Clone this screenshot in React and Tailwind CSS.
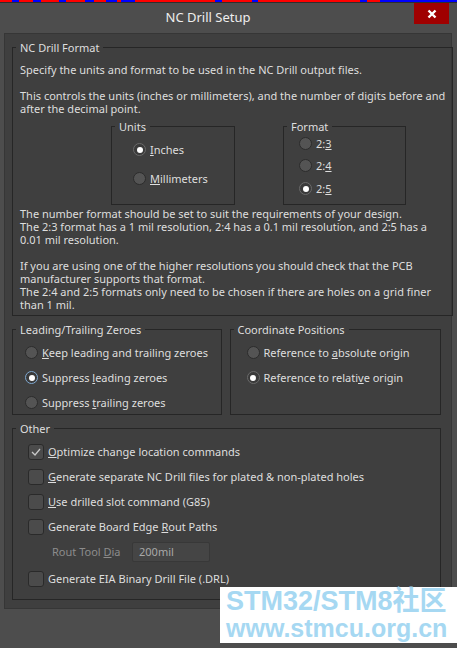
import React from "react";

const blueBits = [
  [12, 7], [33, 8], [59, 7], [85, 9], [106, 11], [121, 14], [215, 7], [252, 6], [360, 7], [380, 77],
];

const Radio = ({ checked, focus }) => (
  <span
    className={`flex items-center justify-center w-[13px] h-[13px] rounded-full shrink-0 border ${
      focus
        ? "border-[#7fa8d0] bg-[#3a3a3a]"
        : checked
        ? "border-[#6a6a6a] bg-[#3a3a3a]"
        : "border-[#2c2c2c] bg-[#545454]"
    }`}
  >
    {checked && <span className="w-[6px] h-[6px] rounded-full bg-white" />}
  </span>
);

const RadioRow = ({ checked, focus, children, className = "h-[25px]" }) => (
  <div className={`flex items-center gap-[4px] ${className}`}>
    <Radio checked={checked} focus={focus} />
    <span>{children}</span>
  </div>
);

const Check = ({ checked }) => (
  <span className="flex items-center justify-center w-[16px] h-[16px] rounded-[3px] border border-[#2a2a2a] bg-[#4b4b4b] shrink-0">
    {checked && (
      <svg width="10" height="8" viewBox="0 0 10 8">
        <path d="M1 4 L4 7 L9 1" fill="none" stroke="#c8c8c8" strokeWidth="1.3" />
      </svg>
    )}
  </span>
);

const CheckRow = ({ checked, children }) => (
  <div className="flex items-center gap-[4px] h-[25px]">
    <Check checked={checked} />
    <span>{children}</span>
  </div>
);

// legend sits on the border; padding goes on the inner div so the legend stays left
const Group = ({ title, className = "", inner = "", children }) => (
  <fieldset className={`border border-[#262626] ${className}`}>
    <legend className="ml-[3px] px-[4px] leading-[13px]">{title}</legend>
    <div className={inner}>{children}</div>
  </fieldset>
);

export default function App() {
  return (
    <div
      className="relative w-[457px] h-[648px] overflow-hidden bg-[#4d4d4d] text-[#dedede] text-[11px] leading-[13px]"
      style={{ fontFamily: '"Noto Sans", "Liberation Sans", sans-serif' }}
    >
      <svg width="457" height="2" className="block">
        <rect width="457" height="2" fill="#ff0000" />
        {blueBits.map(([x, w]) => (
          <rect key={x} x={x} width={w} height="2" fill="#0000ff" />
        ))}
      </svg>

      <div className="flex h-[31px] border-t border-[#2e2e2e]">
        <div className="flex-1 flex items-center justify-center text-[13px] text-[#eeeeee] pl-[2px] pb-[1px]">NC Drill Setup</div>
        <div className="mr-[8px] w-[35px] h-[21px] bg-[#a00000] flex items-center justify-center">
          <svg width="10" height="10" viewBox="0 0 10 10">
            <path d="M1.5 1.5 L8.5 8.5 M8.5 1.5 L1.5 8.5" stroke="#ffffff" strokeWidth="2.4" />
          </svg>
        </div>
      </div>

      <div className="ml-[4px] w-[448px] h-[576px] border border-[#363636] bg-[#3f3f3f] pl-[7px] pr-[10px] pt-[7px]">
        <Group title="NC Drill Format" className="h-[275px]" inner="px-[7px] pt-[9px] whitespace-nowrap">
          <p>Specify the units and format to be used in the NC Drill output files.</p>
          <p className="mt-[13px]">
            This controls the units (inches or millimeters), and the number of digits before and
            <br />
            after the decimal point.
          </p>
          <div className="flex gap-[48px] ml-[91px] mt-[5px]">
            <Group title="Units" className="w-[124px] h-[85px]" inner="pl-[21px] pt-[2px]">
              <RadioRow checked className="h-[29px]">
                <u>I</u>nches
              </RadioRow>
              <RadioRow className="h-[29px]">
                <u>M</u>illimeters
              </RadioRow>
            </Group>
            <Group title="Format" className="w-[123px] h-[85px]" inner="pl-[15px] -mt-[1px]">
              <RadioRow className="h-[22px]">
                2:<u>3</u>
              </RadioRow>
              <RadioRow className="h-[23px]">
                2:<u>4</u>
              </RadioRow>
              <RadioRow checked className="h-[23px]">
                2:<u>5</u>
              </RadioRow>
            </Group>
          </div>
          <p className="mt-[2px]">
            The number format should be set to suit the requirements of your design.
            <br />
            The 2:3 format has a 1 mil resolution, 2:4 has a 0.1 mil resolution, and 2:5 has a
            <br />
            0.01 mil resolution.
          </p>
          <p className="mt-[13px]">
            If you are using one of the higher resolutions you should check that the PCB
            <br />
            manufacturer supports that format.
            <br />
            The 2:4 and 2:5 formats only need to be chosen if there are holes on a grid finer
            <br />
            than 1 mil.
          </p>
        </Group>

        <div className="flex gap-[8px] mt-[7px]">
          <Group title="Leading/Trailing Zeroes" className="w-[210px] h-[92px]" inner="pl-[12px] pt-[4px]">
            <RadioRow>
              <u>K</u>eep leading and trailing zeroes
            </RadioRow>
            <RadioRow checked focus>
              Suppress <u>l</u>eading zeroes
            </RadioRow>
            <RadioRow>
              Suppress <u>t</u>railing zeroes
            </RadioRow>
          </Group>
          <Group title="Coordinate Positions" className="w-[212px] h-[92px]" inner="pl-[16px] pt-[4px]">
            <RadioRow>
              Reference to <u>a</u>bsolute origin
            </RadioRow>
            <RadioRow checked>
              Reference to relati<u>v</u>e origin
            </RadioRow>
          </Group>
        </div>

        <Group title="Other" className="h-[178px] mt-[7px]" inner="pl-[15px] pt-[4px]">
          <CheckRow checked>
            <u>O</u>ptimize change location commands
          </CheckRow>
          <CheckRow>
            <u>G</u>enerate separate NC Drill files for plated &amp; non-plated holes
          </CheckRow>
          <CheckRow>
            <u>U</u>se drilled slot command (G85)
          </CheckRow>
          <CheckRow>
            Generate Board Edge <u>R</u>out Paths
          </CheckRow>
          <div className="flex items-center h-[25px] pl-[24px]">
            <span className="w-[80px] text-[#8c8c8c]">
              Rout Tool <u>D</u>ia
            </span>
            <div className="w-[78px] h-[20px] rounded-[2px] border border-[#383838] bg-[#454545] text-[#a8a8a8] pl-[6px] flex items-center">
              200mil
            </div>
          </div>
          <div className="h-[2px]" />
          <CheckRow>Generate EIA Binary Drill File (.DRL)</CheckRow>
        </Group>
      </div>

      <div
        className="absolute left-[220px] top-[587px] w-[237px] h-[56px] bg-white text-[#a6d8f2] font-bold flex flex-col items-start justify-center pl-[6px] leading-[27px]"
        style={{ fontFamily: '"Liberation Sans", "Noto Sans CJK SC", sans-serif' }}
      >
        <span className="text-[27px]">STM32/STM8社区</span>
        <span className="text-[25px]">www.stmcu.org.cn</span>
      </div>
    </div>
  );
}
